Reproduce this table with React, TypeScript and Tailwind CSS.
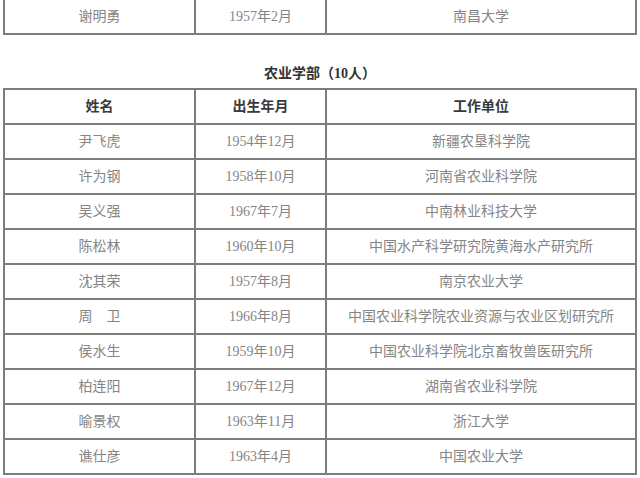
import React from 'react';

// One academician row: name, birth month, employer
interface Member {
  name: string;
  born: string;
  unit: string;
}

const members: Member[] = [
  { name: '尹飞虎', born: '1954年12月', unit: '新疆农垦科学院' },
  { name: '许为钢', born: '1958年10月', unit: '河南省农业科学院' },
  { name: '吴义强', born: '1967年7月', unit: '中南林业科技大学' },
  { name: '陈松林', born: '1960年10月', unit: '中国水产科学研究院黄海水产研究所' },
  { name: '沈其荣', born: '1957年8月', unit: '南京农业大学' },
  { name: '周　卫', born: '1966年8月', unit: '中国农业科学院农业资源与农业区划研究所' },
  { name: '侯水生', born: '1959年10月', unit: '中国农业科学院北京畜牧兽医研究所' },
  { name: '柏连阳', born: '1967年12月', unit: '湖南省农业科学院' },
  { name: '喻景权', born: '1963年11月', unit: '浙江大学' },
  { name: '谯仕彦', born: '1963年4月', unit: '中国农业大学' },
];

const fontStack = { fontFamily: '"Liberation Serif", "Noto Sans CJK SC", serif' };

const Row: React.FC<{ cells: string[]; header?: boolean }> = ({ cells, header }) => (
  <div className="grid grid-cols-[191px_131px_1fr] h-[35px] border-b-2 border-[#7d7d7d]">
    {cells.map((c, i) => (
      <div
        key={i}
        className={
          'flex items-center justify-center text-[14px] leading-none ' +
          (i < 2 ? 'border-r-2 border-[#7d7d7d] ' : '') +
          (header ? 'font-bold text-[#3a3a3a]' : 'text-[#858585]')
        }
      >
        {c}
      </div>
    ))}
  </div>
);

const App: React.FC = () => {
  return (
    <div className="w-[640px] h-[478px] overflow-hidden bg-white" style={fontStack}>
      {/* tail of previous department's table */}
      <div className="ml-[3px] w-[634px] -mt-[2px] border-t-2 border-x-2 border-[#7d7d7d]">
        <Row cells={['谢明勇', '1957年2月', '南昌大学']} />
      </div>

      <div className="pt-[31px] pb-[6px] text-center text-[14px] leading-[16px] font-bold text-[#333]">
        农业学部（10人）
      </div>

      <div className="ml-[3px] w-[634px] border-t-2 border-x-2 border-[#7d7d7d]">
        <Row cells={['姓名', '出生年月', '工作单位']} header />
        {members.map((m) => (
          <Row key={m.name} cells={[m.name, m.born, m.unit]} />
        ))}
      </div>
    </div>
  );
};

export default App;
